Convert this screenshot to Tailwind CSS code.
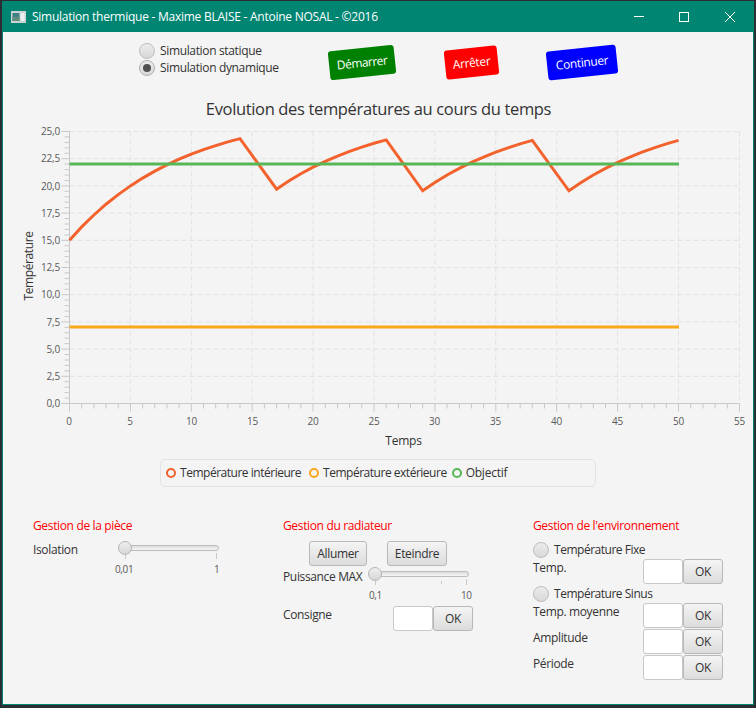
<!DOCTYPE html>
<html>
<head>
<meta charset="utf-8">
<script src="https://cdn.jsdelivr.net/npm/@tailwindcss/browser@4"></script>
<title>Simulation thermique</title>
</head>
<body class="m-0 w-[756px] h-[708px] overflow-hidden bg-[#2a2e32] font-['Open_Sans',sans-serif] text-[12px] tracking-[-0.35px] text-[#333]">
<div class="ml-[2px] mt-[1px] w-[752px] h-[704px] flex flex-col border-x border-b border-[#008573] bg-[#f4f4f4]">
  <!-- title bar -->
  <div class="h-[31px] shrink-0 bg-[#008573] flex items-center text-white -mx-px pl-[9px]">
    <svg width="15" height="12" viewBox="0 0 15 12" class="shrink-0">
      <rect x="0" y="0" width="15" height="12" fill="#c9d3d3"/>
      <rect x="1.500" y="2" width="7" height="8" fill="#3f7f86"/>
      <rect x="9.500" y="2" width="4" height="8" fill="#e8eeee"/>
      <rect x="1.500" y="6" width="7" height="4" fill="#5f8f7a"/>
    </svg>
    <span class="ml-[6px] leading-none tracking-[-0.25px]">Simulation thermique - Maxime BLAISE - Antoine NOSAL - ©2016</span>
    <div class="ml-auto flex items-center">
      <svg width="12" height="12" viewBox="0 0 12 12" class="mr-[33px]"><path d="M1 5.500H11" stroke="#fff" fill="none"/></svg>
      <svg width="12" height="12" viewBox="0 0 12 12" class="mr-[34px]"><rect x="1.500" y="1.500" width="9" height="9" stroke="#fff" fill="none"/></svg>
      <svg width="12" height="12" viewBox="0 0 12 12" class="mr-[18px]"><path d="M1 1L11 11M11 1L1 11" stroke="#fff" fill="none"/></svg>
    </div>
  </div>

  <!-- top controls -->
  <div class="h-[60px] shrink-0 flex items-center">
    <div class="ml-[136px] w-[190px] flex flex-col gap-px mb-[5px]">
      <label class="flex items-center gap-[5px] h-[16px]">
        <span class="w-4 h-4 rounded-full border border-[#bdbdbd] bg-linear-to-b from-[#ececec] to-[#d8d8d8]"></span>
        <span>Simulation statique</span>
      </label>
      <label class="flex items-center gap-[5px] h-[16px]">
        <span class="w-4 h-4 rounded-full border border-[#b0b0b0] bg-linear-to-b from-[#ececec] to-[#d8d8d8] flex items-center justify-center"><span class="w-2 h-2 rounded-full bg-[#505050]"></span></span>
        <span>Simulation dynamique</span>
      </label>
    </div>
    <div class="w-[66px] h-[29px] -rotate-6 rounded-[3px] bg-[#008000] text-white tracking-[-0.5px] flex items-center justify-center">Démarrer</div>
    <div class="ml-[50px] w-[53px] h-[29px] -rotate-6 rounded-[3px] bg-[#ff0000] text-white flex items-center justify-center">Arrêter</div>
    <div class="ml-[49px] w-[70px] h-[29px] -rotate-6 rounded-[3px] bg-[#0000ff] text-white flex items-center justify-center">Continuer</div>
  </div>

  <!-- chart title -->
  <div class="h-[30px] shrink-0 pt-[4px] flex items-center justify-center text-[16.500px] text-[#333] pl-[1px]">Evolution des températures au cours du temps</div>

  <!-- chart -->
  <svg class="block shrink-0" width="750" height="332" viewBox="3 122 750 332" font-family="Open Sans, sans-serif">
    <g stroke="#e2e2e2" stroke-width="1" stroke-dasharray="5 3" fill="none">
      <path d="M69.500 131.500H739.500M69.500 158.700H739.500M69.500 185.900H739.500M69.500 213.100H739.500M69.500 240.300H739.500M69.500 267.500H739.500M69.500 294.700H739.500M69.500 321.900H739.500M69.500 349.100H739.500M69.500 376.300H739.500"/>
      <path d="M130.400 131.500V403.500M191.300 131.500V403.500M252.200 131.500V403.500M313.100 131.500V403.500M374 131.500V403.500M434.900 131.500V403.500M495.800 131.500V403.500M556.700 131.500V403.500M617.600 131.500V403.500M678.500 131.500V403.500M739.500 131.500V403.500"/>
    </g>
    <!-- axes -->
    <g stroke="#c8c8c8" stroke-width="1" fill="none">
      <path d="M69.500 131V403.500H739.500"/>
      <path d="M61.500 131.500H69.500M61.500 158.700H69.500M61.500 185.900H69.500M61.500 213.100H69.500M61.500 240.300H69.500M61.500 267.500H69.500M61.500 294.700H69.500M61.500 321.900H69.500M61.500 349.100H69.500M61.500 376.300H69.500M61.500 403.500H69.500"/>
      <path d="M64.500 136.900H69.500M64.500 142.400H69.500M64.500 147.800H69.500M64.500 153.300H69.500M64.500 164.100H69.500M64.500 169.600H69.500M64.500 175H69.500M64.500 180.500H69.500M64.500 191.300H69.500M64.500 196.800H69.500M64.500 202.200H69.500M64.500 207.700H69.500M64.500 218.500H69.500M64.500 224H69.500M64.500 229.400H69.500M64.500 234.900H69.500M64.500 245.700H69.500M64.500 251.200H69.500M64.500 256.600H69.500M64.500 262.100H69.500M64.500 272.900H69.500M64.500 278.400H69.500M64.500 283.800H69.500M64.500 289.300H69.500M64.500 300.100H69.500M64.500 305.600H69.500M64.500 311H69.500M64.500 316.500H69.500M64.500 327.300H69.500M64.500 332.800H69.500M64.500 338.200H69.500M64.500 343.700H69.500M64.500 354.500H69.500M64.500 360H69.500M64.500 365.400H69.500M64.500 370.900H69.500M64.500 381.700H69.500M64.500 387.200H69.500M64.500 392.600H69.500M64.500 398.100H69.500"/>
      <path d="M69.500 403.500V411.500M130.400 403.500V411.500M191.300 403.500V411.500M252.200 403.500V411.500M313.100 403.500V411.500M374 403.500V411.500M434.900 403.500V411.500M495.800 403.500V411.500M556.700 403.500V411.500M617.600 403.500V411.500M678.500 403.500V411.500M739.500 403.500V411.500"/>
      <path d="M81.700 403.500v5M93.900 403.500v5M106 403.500v5M118.200 403.500v5M142.600 403.500v5M154.800 403.500v5M166.900 403.500v5M179.100 403.500v5M203.500 403.500v5M215.700 403.500v5M227.800 403.500v5M240 403.500v5M264.400 403.500v5M276.600 403.500v5M288.700 403.500v5M300.900 403.500v5M325.300 403.500v5M337.500 403.500v5M349.600 403.500v5M361.800 403.500v5M386.200 403.500v5M398.400 403.500v5M410.500 403.500v5M422.700 403.500v5M447.100 403.500v5M459.300 403.500v5M471.400 403.500v5M483.600 403.500v5M508 403.500v5M520.200 403.500v5M532.300 403.500v5M544.500 403.500v5M568.900 403.500v5M581.100 403.500v5M593.300 403.500v5M605.500 403.500v5M629.800 403.500v5M642 403.500v5M654.200 403.500v5M666.300 403.500v5M690.700 403.500v5M702.900 403.500v5M715.100 403.500v5M727.300 403.500v5"/>
    </g>
    <!-- series -->
    <path d="M69.500 327H679" stroke="#fba71b" stroke-width="3" fill="none"/>
    <path d="M69.500 240.300L81.700 226.900L93.900 215L106 204.200L118.200 194.600L130.400 185.900L142.600 178.100L154.800 171.100L166.900 164.900L179.100 159.200L191.300 154.100L203.500 149.600L215.700 145.600L227.800 141.900L240 138.600L276.600 189.200L288.700 181L300.900 173.700L313.100 167.200L325.300 161.300L337.500 156.100L349.600 151.300L361.800 147.100L374 143.300L386.200 139.900L422.700 190.800L434.900 182.500L447.100 175L459.300 168.400L471.400 162.400L483.600 157.100L495.800 152.200L508 147.800L520.200 143.900L532.300 140.400L568.900 190.800L581.100 182.500L593.300 175L605.500 168.400L617.600 162.400L629.800 157.100L642 152.200L654.200 147.800L666.300 143.900L678.500 140.400" stroke="#f3622d" stroke-width="3" fill="none" stroke-linejoin="miter"/>
    <path d="M69.500 164H679" stroke="#57b757" stroke-width="3" fill="none"/>
    <!-- labels -->
    <g fill="#595959" font-size="10" text-anchor="end" letter-spacing="-0.2">
      <text x="60" y="135">25,0</text><text x="60" y="162">22,5</text><text x="60" y="189.500">20,0</text><text x="60" y="216.500">17,5</text><text x="60" y="244">15,0</text><text x="60" y="271">12,5</text><text x="60" y="298">10,0</text><text x="60" y="325.500">7,5</text><text x="60" y="352.500">5,0</text><text x="60" y="380">2,5</text><text x="60" y="407">0,0</text>
    </g>
    <g fill="#595959" font-size="10" text-anchor="middle" letter-spacing="-0.2">
      <text x="69" y="425">0</text><text x="130" y="425">5</text><text x="191.500" y="425">10</text><text x="252.500" y="425">15</text><text x="313" y="425">20</text><text x="374" y="425">25</text><text x="434.500" y="425">30</text><text x="495.500" y="425">35</text><text x="556.500" y="425">40</text><text x="617.500" y="425">45</text><text x="678.500" y="425">50</text><text x="739.500" y="425">55</text>
    </g>
    <text x="403.500" y="445" fill="#333" font-size="12" text-anchor="middle" letter-spacing="-0.25">Temps</text>
    <text transform="translate(33 266) rotate(-90)" fill="#333" font-size="12" text-anchor="middle" letter-spacing="-0.4">Température</text>
  </svg>

  <!-- legend -->
  <div class="shrink-0 mt-[5px] ml-[157px] w-[436px] h-[28px] rounded-[5px] border border-[#e3e3e3] flex items-center pl-[5px]">
    <span class="w-[10px] h-[10px] rounded-full border-[2.500px] border-[#f3622d]"></span><span class="ml-[4px] tracking-[-0.48px]">Température intérieure</span>
    <span class="ml-[8px] w-[10px] h-[10px] rounded-full border-[2.500px] border-[#fba71b]"></span><span class="ml-[4px] tracking-[-0.48px]">Température extérieure</span>
    <span class="ml-[5px] w-[10px] h-[10px] rounded-full border-[2.500px] border-[#57b757]"></span><span class="ml-[4px] tracking-[-0.25px]">Objectif</span>
  </div>

  <!-- panels -->
  <div class="mt-[30px] ml-[30px] grid grid-cols-[250px_250px_190px]">
    <!-- piece -->
    <div>
      <div class="h-[18px] flex items-center text-[#ff0000]">Gestion de la pièce</div>
      <div class="mt-[6px] flex">
        <div class="w-[85px] h-[18px] flex items-center">Isolation</div>
        <div class="w-[108px]">
          <div class="relative h-[14px]">
            <div class="absolute left-[7px] right-[7px] top-[4px] h-[6px] rounded-full border border-[#bcbcbc] bg-linear-to-b from-[#dcdcdc] to-[#f6f6f6]"></div>
            <span class="absolute left-0 top-0 w-[14px] h-[14px] rounded-full border border-[#b5b5b5] bg-linear-to-b from-[#efefef] to-[#d6d6d6]"></span>
          </div>
          <div class="relative h-[24px] text-[10px] text-[#595959]">
            <span class="absolute left-[7px] top-[-2px] w-px h-[6px] bg-[#c8c8c8]"></span>
            <span class="absolute left-[98px] top-[-2px] w-px h-[6px] bg-[#c8c8c8]"></span>
            <span class="absolute left-[-3px] top-[7px] leading-[14px]">0,01</span>
            <span class="absolute left-[96px] top-[7px] leading-[14px]">1</span>
          </div>
        </div>
      </div>
    </div>

    <!-- radiateur -->
    <div>
      <div class="h-[18px] flex items-center text-[#ff0000]">Gestion du radiateur</div>
      <div class="mt-[6px] flex pl-[26px] gap-[20px]">
        <div class="w-[58px] h-[25px] rounded-[3px] border border-[#b8b8b8] bg-linear-to-b from-[#f4f4f4] to-[#dcdcdc] flex items-center justify-center">Allumer</div>
        <div class="w-[60px] h-[25px] rounded-[3px] border border-[#b8b8b8] bg-linear-to-b from-[#f4f4f4] to-[#dcdcdc] flex items-center justify-center">Eteindre</div>
      </div>
      <div class="flex mt-[1px]">
        <div class="w-[85px] h-[19px] flex items-center">Puissance MAX</div>
        <div class="w-[101px]">
          <div class="relative h-[14px]">
            <div class="absolute left-[7px] right-0 top-[4px] h-[6px] rounded-full border border-[#bcbcbc] bg-linear-to-b from-[#dcdcdc] to-[#f6f6f6]"></div>
            <span class="absolute left-0 top-0 w-[14px] h-[14px] rounded-full border border-[#b5b5b5] bg-linear-to-b from-[#efefef] to-[#d6d6d6]"></span>
          </div>
          <div class="relative h-[20px] text-[10px] text-[#595959]">
            <span class="absolute left-[7px] top-[-2px] w-px h-[6px] bg-[#c8c8c8]"></span>
            <span class="absolute left-[73px] top-0 w-px h-[3px] bg-[#c8c8c8]"></span>
            <span class="absolute left-[98px] top-[-2px] w-px h-[6px] bg-[#c8c8c8]"></span>
            <span class="absolute left-[1px] top-[7px] leading-[14px]">0,1</span>
            <span class="absolute left-[93px] top-[7px] leading-[14px]">10</span>
          </div>
        </div>
      </div>
      <div class="mt-[5px] w-[190px] flex justify-between">
        <div class="h-[18px] flex items-center">Consigne</div>
        <div class="flex"><div class="w-[40px] h-[25px] rounded-[3px] border border-[#c8c8c8] bg-white"></div><div class="w-[40px] h-[25px] rounded-[3px] border border-[#b8b8b8] bg-linear-to-b from-[#f4f4f4] to-[#dcdcdc] flex items-center justify-center">OK</div></div>
      </div>
    </div>

    <!-- environnement -->
    <div>
      <div class="h-[18px] flex items-center text-[#ff0000]">Gestion de l'environnement</div>
      <label class="mt-[7px] h-[16px] flex items-center gap-[5px]">
        <span class="w-4 h-4 rounded-full border border-[#bdbdbd] bg-linear-to-b from-[#ececec] to-[#d8d8d8]"></span><span class="tracking-[-0.48px]">Température Fixe</span>
      </label>
      <div class="mt-px flex justify-between">
        <div class="h-[18px] flex items-center">Temp.</div>
        <div class="flex"><div class="w-[40px] h-[25px] rounded-[3px] border border-[#c8c8c8] bg-white"></div><div class="w-[40px] h-[25px] rounded-[3px] border border-[#b8b8b8] bg-linear-to-b from-[#f4f4f4] to-[#dcdcdc] flex items-center justify-center">OK</div></div>
      </div>
      <label class="mt-[2px] h-[16px] flex items-center gap-[5px]">
        <span class="w-4 h-4 rounded-full border border-[#bdbdbd] bg-linear-to-b from-[#ececec] to-[#d8d8d8]"></span><span class="tracking-[-0.48px]">Température Sinus</span>
      </label>
      <div class="mt-px flex justify-between">
        <div class="h-[18px] flex items-center">Temp. moyenne</div>
        <div class="flex"><div class="w-[40px] h-[25px] rounded-[3px] border border-[#c8c8c8] bg-white"></div><div class="w-[40px] h-[25px] rounded-[3px] border border-[#b8b8b8] bg-linear-to-b from-[#f4f4f4] to-[#dcdcdc] flex items-center justify-center">OK</div></div>
      </div>
      <div class="mt-px flex justify-between">
        <div class="h-[18px] flex items-center">Amplitude</div>
        <div class="flex"><div class="w-[40px] h-[25px] rounded-[3px] border border-[#c8c8c8] bg-white"></div><div class="w-[40px] h-[25px] rounded-[3px] border border-[#b8b8b8] bg-linear-to-b from-[#f4f4f4] to-[#dcdcdc] flex items-center justify-center">OK</div></div>
      </div>
      <div class="mt-px flex justify-between">
        <div class="h-[18px] flex items-center">Période</div>
        <div class="flex"><div class="w-[40px] h-[25px] rounded-[3px] border border-[#c8c8c8] bg-white"></div><div class="w-[40px] h-[25px] rounded-[3px] border border-[#b8b8b8] bg-linear-to-b from-[#f4f4f4] to-[#dcdcdc] flex items-center justify-center">OK</div></div>
      </div>
    </div>
  </div>
</div>
</body>
</html>
